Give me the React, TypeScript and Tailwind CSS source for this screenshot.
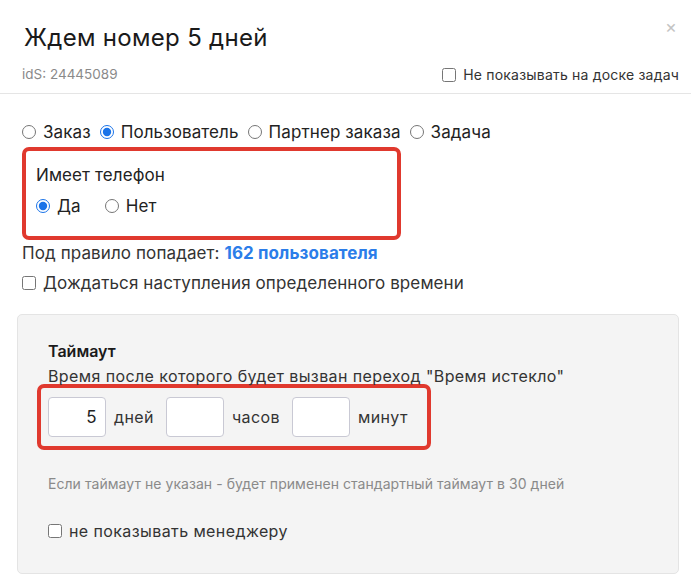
import React from "react";

function Radio({ label, checked }: { label: string; checked?: boolean }) {
  return (
    <label className="flex items-center gap-[7px]">
      <input
        type="radio"
        defaultChecked={checked}
        className="m-0 h-[14px] w-[14px] accent-[#1a73e8]"
      />
      <span>{label}</span>
    </label>
  );
}

function Check({ label, className }: { label: string; className?: string }) {
  return (
    <label className={"flex items-center gap-[7px] " + (className || "")}>
      <input type="checkbox" className="m-0 h-[14px] w-[14px]" />
      <span>{label}</span>
    </label>
  );
}

function NumBox({ value }: { value?: string }) {
  return (
    <input
      type="text"
      defaultValue={value}
      className="h-[40px] w-[58px] rounded-[4px] border border-[#c9c9d4] bg-white px-[8px] text-right text-[17px] text-[#222] outline-none"
    />
  );
}

export default function App() {
  return (
    <div
      className="relative h-[586px] w-[691px] overflow-hidden bg-white text-[#222]"
      style={{ fontFamily: "Inter, 'Noto Sans', sans-serif" }}
    >
      {/* header */}
      <div className="relative border-b border-[#e5e5e5] pb-[8px] pl-[22px] pr-[12px] pt-[22px]">
        <h1 className="pl-[2px] text-[24px] leading-[32px] font-normal tracking-[0.3px] text-[#1a1a1a]">
          Ждем номер 5 дней
        </h1>
        <div className="mt-[10px] flex items-center justify-between">
          <span className="text-[13.5px] text-[#8a8a8a]">idS: 24445089</span>
          <Check
            label="Не показывать на доске задач"
            className="text-[14px] tracking-[0.2px] text-[#333]"
          />
        </div>
        <button className="absolute right-[14px] top-[18px] text-[18px] leading-none text-[#c4c4c4]">
          ×
        </button>
      </div>

      {/* body */}
      <div className="px-[22px] pt-[28px] text-[17px] leading-[20px] tracking-[0.1px]">
        <div className="flex items-center gap-[9px]">
          <Radio label="Заказ" />
          <Radio label="Пользователь" checked />
          <Radio label="Партнер заказа" />
          <Radio label="Задача" />
        </div>

        <div className="mt-[5px] w-[379px] rounded-[7px] border-[4px] border-[#e0392e] px-[10px] pb-[20px] pt-[14px]">
          <div>Имеет телефон</div>
          <div className="mt-[11px] flex items-center gap-[24px]">
            <Radio label="Да" checked />
            <Radio label="Нет" />
          </div>
        </div>

        <div className="mt-[3px] text-[#333]">
          Под правило попадает:{" "}
          <span className="font-bold text-[#2b7de9]">162 пользователя</span>
        </div>
        <Check
          label="Дождаться наступления определенного времени"
          className="mt-[10px] text-[#333]"
        />
      </div>

      {/* timeout panel */}
      <div className="ml-[17px] mt-[21px] w-[662px] rounded-[5px] border border-[#e4e4e4] bg-[#f4f4f4] px-[30px] pb-[30px] pt-[26px]">
        <div className="text-[16px] font-semibold leading-[20px] text-[#1a1a1a]">Таймаут</div>
        <div className="mt-[5px] text-[16px] leading-[20px] tracking-[0.4px] text-[#333]">
          Время после которого будет вызван переход "Время истекло"
        </div>
        <div className="-ml-[11px] mt-[-2px] flex w-[394px] items-center rounded-[7px] border-[4px] border-[#e0392e] px-[7px] py-[9px] text-[16px] tracking-[0.4px] text-[#333]">
          <NumBox value="5" />
          <span className="ml-[8px] mr-[12px]">дней</span>
          <NumBox />
          <span className="ml-[8px] mr-[12px]">часов</span>
          <NumBox />
          <span className="ml-[8px]">минут</span>
        </div>
        <div className="mt-[23px] text-[14px] tracking-[0.05px] text-[#8a8a8a]">
          Если таймаут не указан - будет применен стандартный таймаут в 30 дней
        </div>
        <Check
          label="не показывать менеджеру"
          className="mt-[25px] text-[16px] tracking-[0.4px] text-[#333]"
        />
      </div>
    </div>
  );
}
